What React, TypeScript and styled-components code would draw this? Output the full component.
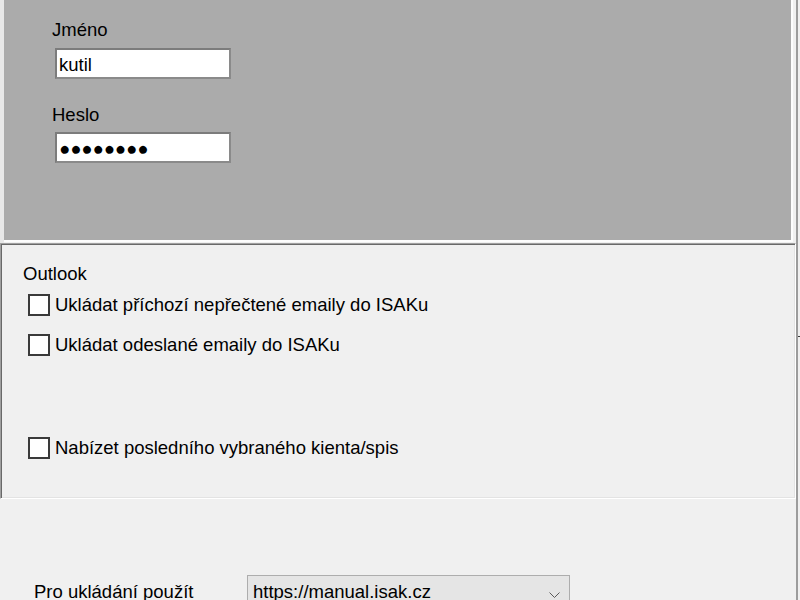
import React from "react";
import styled, { createGlobalStyle } from "styled-components";

const GlobalStyle = createGlobalStyle`
	* {
		box-sizing: border-box;
	}
	html,
	body {
		margin: 0;
		padding: 0;
		background: #f0f0f0;
	}
	body {
		font-family: "Liberation Sans", Arial, sans-serif;
	}
`;

const Window = styled.div`
	display: flex;
	width: 800px;
	height: 600px;
	overflow: hidden;
	background: #f0f0f0;
	color: #000;
	font-size: 18.5px;
	line-height: 22px;
`;

const Main = styled.div`
	flex: 0 0 796px;
	display: flex;
	flex-direction: column;
	min-height: 0;
`;

// Login panel (grey)
const LoginFrame = styled.div`
	flex-shrink: 0;
	padding: 0 3px 1px 4px;
	background: linear-gradient(to right, #e8e8e8 4px, #f0f0f0 4px);
`;

const LoginPanel = styled.div`
	height: 242px;
	background: #ababab;
	border-right: 2px solid #fdfdfd;
	border-bottom: 2px solid #fdfdfd;
	padding: 19px 0 0 48px;
`;

const FieldLabel = styled.div<{ gap?: number }>`
	margin-top: ${(props) => props.gap || 0}px;
	line-height: 22px;
`;

const TextField = styled.input<{ gap: number }>`
	display: block;
	margin: ${(props) => props.gap}px 0 0 3px;
	width: 176px;
	height: 31px;
	padding: 2px 0 0 2px;
	border: 2px solid #8a8a8a;
	border-top-color: #7c7c7c;
	border-left-color: #7c7c7c;
	background: #fff;
	color: #000;
	font: inherit;
	outline: none;
`;

// Outlook group
const Group = styled.section`
	flex-shrink: 0;
	height: 256px;
	border-style: solid;
	border-width: 1px;
	border-color: #a0a0a0 #ffffff #ffffff #a0a0a0;
	box-shadow: inset 1px 1px 0 #696969, inset -1px -1px 0 #e3e3e3;
	padding: 18.5px 0 0 22px;
`;

const GroupTitle = styled.div`
	line-height: 22px;
`;

const CheckList = styled.div`
	display: flex;
	flex-direction: column;
	margin-top: 9.5px;
	padding-left: 5px;
`;

const CheckRow = styled.label<{ gap: number }>`
	display: flex;
	align-items: center;
	column-gap: 5px;
	height: 22px;
	margin-top: ${(props) => props.gap}px;
`;

const CheckBox = styled.input`
	appearance: none;
	margin: 0;
	width: 22px;
	height: 22px;
	border: 2px solid #3a3a3a;
	background: #fff;
	flex-shrink: 0;
`;

// Storage row
const Footer = styled.div`
	flex: 1 1 auto;
	min-height: 0;
	padding: 76px 0 0 34px;
`;

const StorageRow = styled.div`
	display: flex;
	align-items: flex-start;
`;

const StorageLabel = styled.div`
	flex: 0 0 213px;
	margin-top: 6px;
`;

const Select = styled.div`
	display: flex;
	align-items: flex-start;
	justify-content: space-between;
	flex-shrink: 0;
	width: 323px;
	height: 32px;
	padding: 5px 9px 0 5px;
	border: 1px solid #adadad;
	background: #e5e5e5;
	svg {
		margin-top: 11px;
	}
`;

// Window edge
const RightEdge = styled.div`
	flex: 0 0 4px;
	border-left: 2px solid #9c9c9c;
	background: #f0f0f0;
`;

const EdgeTick = styled.div`
	margin-top: 336px;
	height: 1px;
	background: #3a3a3a;
`;

const options = [
	{ label: "Ukládat příchozí nepřečtené emaily do ISAKu", gap: 0 },
	{ label: "Ukládat odeslané emaily do ISAKu", gap: 18 },
	{ label: "Nabízet posledního vybraného kienta/spis", gap: 81 },
];

const App = () => {
	return (
		<>
			<GlobalStyle />
			<Window>
				<Main>
					<LoginFrame>
						<LoginPanel>
							<FieldLabel>Jméno</FieldLabel>
							<TextField gap={7} defaultValue="kutil" readOnly />
							<FieldLabel gap={25}>Heslo</FieldLabel>
							<TextField gap={6} defaultValue="●●●●●●●●" readOnly />
						</LoginPanel>
					</LoginFrame>
					<Group>
						<GroupTitle>Outlook</GroupTitle>
						<CheckList>
							{options.map((opt) => (
								<CheckRow key={opt.label} gap={opt.gap}>
									<CheckBox type="checkbox" />
									<span>{opt.label}</span>
								</CheckRow>
							))}
						</CheckList>
					</Group>
					<Footer>
						<StorageRow>
							<StorageLabel>Pro ukládání použít</StorageLabel>
							<Select>
								<span>https://manual.isak.cz</span>
								<svg width="11" height="6" viewBox="0 0 11 6">
									<polyline
										points="0.5,0.5 5.5,5.5 10.5,0.5"
										fill="none"
										stroke="#5a5a5a"
										strokeWidth="1"
									/>
								</svg>
							</Select>
						</StorageRow>
					</Footer>
				</Main>
				<RightEdge>
					<EdgeTick />
				</RightEdge>
			</Window>
		</>
	);
};

export default App;
